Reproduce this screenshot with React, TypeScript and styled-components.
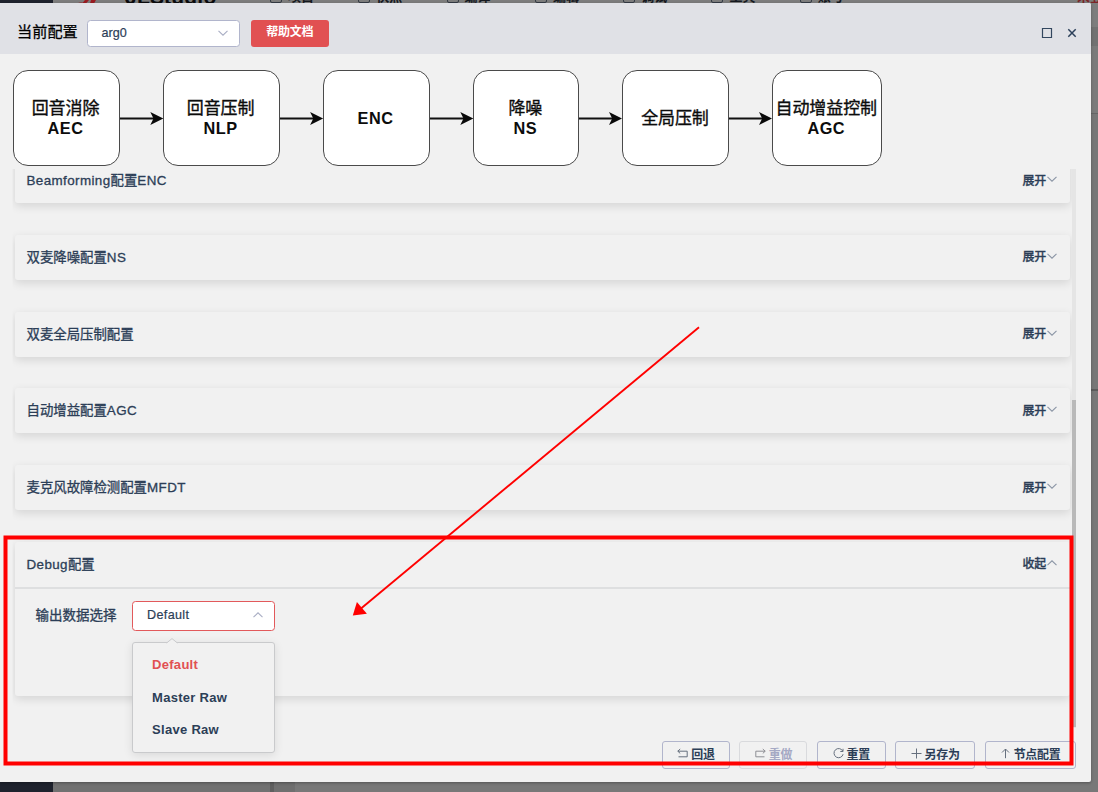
import React from 'react';
import styled, { createGlobalStyle } from 'styled-components';

const sans = `"Liberation Sans", "Noto Sans CJK SC", sans-serif`;
const ink = '#2c3e57';
const line = '#b1b5cc';
const red = '#e15052';

const GlobalStyle = createGlobalStyle`
  html, body { margin: 0; padding: 0; }
  body { background: #787878; overflow: hidden; }
  * { box-sizing: border-box; }
  #root { font-family: ${sans}; color: ${ink}; }
`;

const Page = styled.div`
  position: relative;
  width: 1098px;
  height: 792px;
  overflow: hidden;
  background: #787878;
`;

const Backdrop = styled.div`
  display: grid;
  grid-template-columns: 53px 1fr;
  height: 792px;
`;

const SideRail = styled.div`
  background: #1e222d;
`;

const Workspace = styled.div`
  display: flex;
  flex-direction: column;
  background: #717171;
`;

const MenuBar = styled.div`
  display: flex;
  height: 114px;
  padding-left: 24px;
  background: linear-gradient(#7d7d7d 0 27px, #727272 27px 46px, #7b7b7b 46px);
  border-bottom: 1px solid #666;
`;

const BrandMark = styled.svg`
  display: block;
  width: 48px;
  height: 5px;
`;

const Brand = styled.div`
  width: 145px;
  height: 24px;
  margin-top: -15px;
  font-size: 21px;
  font-weight: 700;
  line-height: 24px;
  letter-spacing: 0.2px;
  color: #0b0b0d;
`;

const MenuItem = styled.div`
  display: flex;
  align-items: center;
  gap: 6px;
  width: 88.3px;
  height: 18px;
  margin-top: -12px;
  font-size: 13px;
  font-weight: 700;
  line-height: 18px;
  color: #15191f;
`;

const MenuIcon = styled.span`
  width: 12px;
  height: 12px;
  border: 1px solid #333a44;
  border-radius: 2px;
`;

const Account = styled.div`
  height: 18px;
  margin: -12px 0 0 189px;
  font-size: 13px;
  font-weight: 700;
  line-height: 18px;
  white-space: nowrap;
  color: #7c2427;
`;

const Panels = styled.div`
  display: grid;
  flex: 1;
  grid-template-columns: 217px 4px 21px 1fr;
`;

const Pane = styled.div<{ $tone: string }>`
  background: ${(p) => p.$tone};
`;

const PaneSplit = styled(Pane)`
  border-top: 275px solid #777;
  box-shadow: inset 0 2px 0 #5c5c5c;
`;

const Dialog = styled.section`
  position: absolute;
  top: 3.4px;
  left: 0;
  display: flex;
  flex-direction: column;
  width: 1091px;
  height: 778.6px;
  border-radius: 0 2px 2px 0;
  background: #f1f1f1;
  box-shadow: 0 1px 3px rgba(0, 0, 0, 0.3);
`;

const Header = styled.header`
  display: flex;
  align-items: center;
  flex: none;
  height: 50.6px;
  padding: 9px 13px 0 17px;
  border-radius: 0 2px 0 0;
  background: #e0e1e6;
`;

const HeaderTitle = styled.div`
  width: 69.5px;
  margin-top: -2px;
  font-size: 15.2px;
  line-height: 20px;
  color: #000;
  -webkit-text-stroke: 0.25px #000;
`;

const SelectBox = styled.div<{ $w: number; $h: number; $active?: boolean }>`
  display: flex;
  align-items: center;
  justify-content: space-between;
  width: ${(p) => p.$w}px;
  height: ${(p) => p.$h}px;
  padding: 0 11px 1px 14px;
  border: 1px solid ${(p) => (p.$active ? '#e2595b' : line)};
  border-radius: 3.5px;
  background: #fff;
  font-size: 12.6px;
  letter-spacing: ${(p) => (p.$active ? 0.35 : 0)}px;
  -webkit-text-stroke: 0.2px ${ink};
`;

const HeaderSelect = styled.div`
  margin-top: 0;
`;

const HelpButton = styled.div`
  width: 77.5px;
  height: 27px;
  margin: 0 0 0 11px;
  border-radius: 3px;
  background: ${red};
  color: #fff;
  font-size: 12px;
  font-weight: 700;
  line-height: 24px;
  text-align: center;
  letter-spacing: -0.2px;
`;

const WindowTools = styled.div`
  display: flex;
  gap: 13px;
  margin: 0 0 0 auto;
`;

const Icon = styled.svg`
  display: block;
  flex: none;
  overflow: visible;
  fill: none;
`;

const Flow = styled.div`
  display: flex;
  align-items: center;
  flex: none;
  height: 115px;
  padding: 13px 0 0 13px;
`;

const FlowNode = styled.div<{ $w: number }>`
  display: flex;
  flex-direction: column;
  align-items: center;
  justify-content: center;
  flex: none;
  width: ${(p) => p.$w}px;
  height: 96px;
  padding-right: 1.6px;
  border: 1.4px solid #4a4a4a;
  border-radius: 15px;
  background: #fff;
  color: #0c0c0c;
  font-size: 16.3px;
  font-weight: 700;
  line-height: 20px;
  letter-spacing: 0.5px;
  white-space: nowrap;
`;

const FlowLabel = styled.span`
  margin: 1px 0 -1px;
  font-size: 17px;
  font-weight: 400;
  letter-spacing: -0.1px;
  -webkit-text-stroke: 0.35px #0c0c0c;
`;

const ScrollRow = styled.div`
  display: flex;
  flex: none;
  height: 559px;
`;

const Sections = styled.div`
  flex: none;
  width: 1072px;
  padding: 0 0 0 15px;
  clip-path: inset(0 0 -40px 12.5px);
`;

const SectionList = styled.div`
  display: flex;
  flex-direction: column;
  gap: 31.75px;
  margin-top: -10.8px;
`;

const Card = styled.div<{ $h: number }>`
  width: 1055px;
  height: ${(p) => p.$h}px;
  border-radius: 3px;
  background: #f1f1f1;
  box-shadow: 0 3px 10px rgba(0, 0, 0, 0.12);
`;

const CardHead = styled.div<{ $open?: boolean }>`
  display: flex;
  align-items: center;
  justify-content: space-between;
  height: ${(p) => (p.$open ? 47.5 : 45)}px;
  padding: 0 13px ${(p) => (p.$open ? 4 : 3)}px 11.5px;
  border-bottom: ${(p) => (p.$open ? '2px solid #dedfe0' : '0')};
`;

const CardTitle = styled.div`
  font-size: 13.4px;
  letter-spacing: 0.4px;
  -webkit-text-stroke: 0.3px ${ink};

  span { letter-spacing: 0; }
`;

const Toggle = styled.div`
  display: flex;
  align-items: center;
  gap: 1px;
  font-size: 12px;
  font-weight: 500;
  letter-spacing: -0.2px;
  -webkit-text-stroke: 0.3px ${ink};
`;

const Field = styled.div`
  display: flex;
  align-items: flex-start;
  padding: 11.3px 0 0 20.5px;
`;

const FieldLabel = styled.div`
  width: 96.5px;
  font-size: 13.5px;
  line-height: 29px;
  -webkit-text-stroke: 0.3px ${ink};
`;

const Picker = styled.div`
  position: relative;
`;

const Options = styled.div`
  position: absolute;
  top: 41.5px;
  left: 0;
  z-index: 2;
  width: 143px;
  height: 111px;
  padding: 6px 0;
  border: 1px solid #c9cacc;
  border-radius: 3px;
  background: #f1f1f1;
  box-shadow: 0 2px 10px rgba(0, 0, 0, 0.1);
`;

const Notch = styled.svg`
  position: absolute;
  top: -5px;
  left: 33px;
  display: block;
`;

const Option = styled.div<{ $on?: boolean }>`
  height: 32.5px;
  padding-left: 19px;
  color: ${(p) => (p.$on ? red : ink)};
  font-size: 13px;
  font-weight: 700;
  line-height: 31px;
  letter-spacing: 0.3px;
`;

const Track = styled.div`
  width: 4px;
  height: 559px;
  padding-top: 231px;
  background: #e5e5e5;
`;

const Thumb = styled.div`
  height: 327px;
  background: #b9b9b9;
`;

const Footer = styled.footer`
  display: flex;
  gap: 9.4px;
  padding: 13px 0 0 662px;
`;

const ActionButton = styled.div<{ $w: number; $off?: boolean }>`
  display: flex;
  align-items: center;
  justify-content: center;
  gap: 3px;
  width: ${(p) => p.$w}px;
  height: 28px;
  padding-bottom: 2px;
  border: 1px solid ${(p) => (p.$off ? '#d9dadd' : line)};
  border-radius: 3px;
  color: ${(p) => (p.$off ? '#a5a9c4' : ink)};
  font-size: 12px;
  font-weight: 700;
  letter-spacing: -0.3px;
  white-space: nowrap;
`;

const Annotation = styled.svg`
  position: absolute;
  top: 0;
  left: 0;
  z-index: 5;
  pointer-events: none;
`;

const Chevron = ({ up, color = '#a9aec4', w = 10 }: { up?: boolean; color?: string; w?: number }) => (
  <Icon width={w} height="6" viewBox="0 0 10 6" stroke={color} strokeWidth="1.1">
    <path d={up ? 'M.5 5.2 5 .8l4.5 4.4' : 'M.5.8 5 5.2 9.5.8'} />
  </Icon>
);

const FlowArrow = ({ w }: { w: number }) => (
  <Icon width={w} height="14" viewBox={`0 0 ${w} 14`}>
    <path d={`M0 7.4H${w - 8}`} stroke="#111" strokeWidth="2" />
    <path d={`M${w} 7.4 ${w - 13} .9l3.2 6.5-3.2 6.5z`} fill="#0a0a0a" />
  </Icon>
);

type Step = { w: number; zh?: string; en?: string; arrow?: number };
const steps: Step[] = [
  { w: 106.6, zh: '回音消除', en: 'AEC', arrow: 43.3 },
  { w: 117, zh: '回音压制', en: 'NLP', arrow: 43.1 },
  { w: 106.6, en: 'ENC', arrow: 43.3 },
  { w: 106.6, zh: '降噪', en: 'NS', arrow: 43 },
  { w: 106.6, zh: '全局压制', arrow: 43 },
  { w: 110, zh: '自动增益控制', en: 'AGC' },
];

const sections: [string, string, string][] = [
  ['Beamforming', '配置', 'ENC'],
  ['', '双麦降噪配置', 'NS'],
  ['', '双麦全局压制配置', ''],
  ['', '自动增益配置', 'AGC'],
  ['', '麦克风故障检测配置', 'MFDT'],
];

const menu = ['项目', '快照', '编译', '编辑', '调试', '工具', '账号'];

const actions = [
  { label: '回退', w: 68, d: 'M3.2 1 .8 3.2l2.4 2.2M.8 3.2h9.4v5.6H1.5' },
  { label: '重做', w: 68, off: true, d: 'M7.8 1l2.4 2.2-2.4 2.2M10.2 3.2H.8v5.6h8.7' },
  { label: '重置', w: 69, d: 'M9.8 3.2A4.6 4.6 0 1 0 10.1 6.2M10 .8v2.7H7.3' },
  { label: '另存为', w: 80, d: 'M5.5.5v10M.5 5.5h10' },
  { label: '节点配置', w: 91, d: 'M5.5 1v9.2M2 4.5 5.5 1 9 4.5' },
];

export default function App() {
  return (
    <Page>
      <GlobalStyle />
      <Backdrop>
        <SideRail />
        <Workspace>
          <MenuBar>
            <BrandMark viewBox="0 0 48 5">
              <path d="M0 3.5q4-2 8 0M8 0h4L9 3.5H5zM14 0h5l-2 3.5h-4z" fill="#9b1c22" />
            </BrandMark>
            <Brand>JLStudio</Brand>
            {menu.map((m) => (
              <MenuItem key={m}>
                <MenuIcon />
                {m}
              </MenuItem>
            ))}
            <Account>未登录</Account>
          </MenuBar>
          <Panels>
            <Pane $tone="#717171" />
            <Pane $tone="#5f5f5f" />
            <Pane $tone="#6f6f6f" />
            <PaneSplit $tone="#787878" />
          </Panels>
        </Workspace>
      </Backdrop>

      <Dialog>
        <Header>
          <HeaderTitle>当前配置</HeaderTitle>
          <HeaderSelect>
            <SelectBox $w={153.5} $h={27}>
              arg0
              <Chevron />
            </SelectBox>
          </HeaderSelect>
          <HelpButton>帮助文档</HelpButton>
          <WindowTools>
            <Icon width="12" height="12" viewBox="0 0 12 12" stroke="#33475f" strokeWidth="1.2">
              <path d="M1.5 1.5h9v9h-9z" />
            </Icon>
            <Icon width="12" height="12" viewBox="0 0 12 12" stroke="#2c405a" strokeWidth="1.5">
              <path d="m2.3 2.3 7.4 7.4M9.7 2.3 2.3 9.7" />
            </Icon>
          </WindowTools>
        </Header>

        <Flow>
          {steps.map((s, i) => (
            <React.Fragment key={i}>
              <FlowNode $w={s.w}>
                {s.zh && <FlowLabel>{s.zh}</FlowLabel>}
                {s.en}
              </FlowNode>
              {s.arrow && <FlowArrow w={s.arrow} />}
            </React.Fragment>
          ))}
        </Flow>

        <ScrollRow>
          <Sections>
            <SectionList>
              {sections.map(([pre, zh, post]) => (
                <Card key={zh + post} $h={45}>
                  <CardHead>
                    <CardTitle>
                      {pre}
                      <span>{zh}</span>
                      {post}
                    </CardTitle>
                    <Toggle>
                      展开
                      <Chevron color="#8c96a6" />
                    </Toggle>
                  </CardHead>
                </Card>
              ))}
              <Card $h={154.5}>
                <CardHead $open>
                  <CardTitle>
                    Debug<span>配置</span>
                  </CardTitle>
                  <Toggle>
                    收起
                    <Chevron up color="#8c96a6" />
                  </Toggle>
                </CardHead>
                <Field>
                  <FieldLabel>输出数据选择</FieldLabel>
                  <Picker>
                    <SelectBox $w={143} $h={30} $active>
                      Default
                      <Chevron up />
                    </SelectBox>
                    <Options>
                      <Notch width="12" height="6" viewBox="0 0 12 6">
                        <path d="M0 5.5 6 .6l6 4.9z" fill="#f1f1f1" />
                        <path d="M.6 5 6 .6 11.4 5" fill="none" stroke="#c9cacc" />
                      </Notch>
                      <Option $on>Default</Option>
                      <Option>Master Raw</Option>
                      <Option>Slave Raw</Option>
                    </Options>
                  </Picker>
                </Field>
              </Card>
            </SectionList>
          </Sections>
          <Track>
            <Thumb />
          </Track>
        </ScrollRow>

        <Footer>
          {actions.map((a) => (
            <ActionButton key={a.label} $w={a.w} $off={a.off}>
              <Icon width="11" height="11" viewBox="0 0 11 11" stroke={a.off ? '#8e8f94' : '#66707e'} strokeWidth="1">
                <path d={a.d} />
              </Icon>
              {a.label}
            </ActionButton>
          ))}
        </Footer>
      </Dialog>

      <Annotation width="1098" height="792" viewBox="0 0 1098 792">
        <rect x="5.5" y="537.5" width="1066" height="226" fill="none" stroke="#f00" strokeWidth="4" />
        <path d="M699 327.3 361 608.5" stroke="#f00" strokeWidth="1.9" />
        <path d="m352.8 615.6 4.1-13.6 10 11.7z" fill="#f00" />
      </Annotation>
    </Page>
  );
}
